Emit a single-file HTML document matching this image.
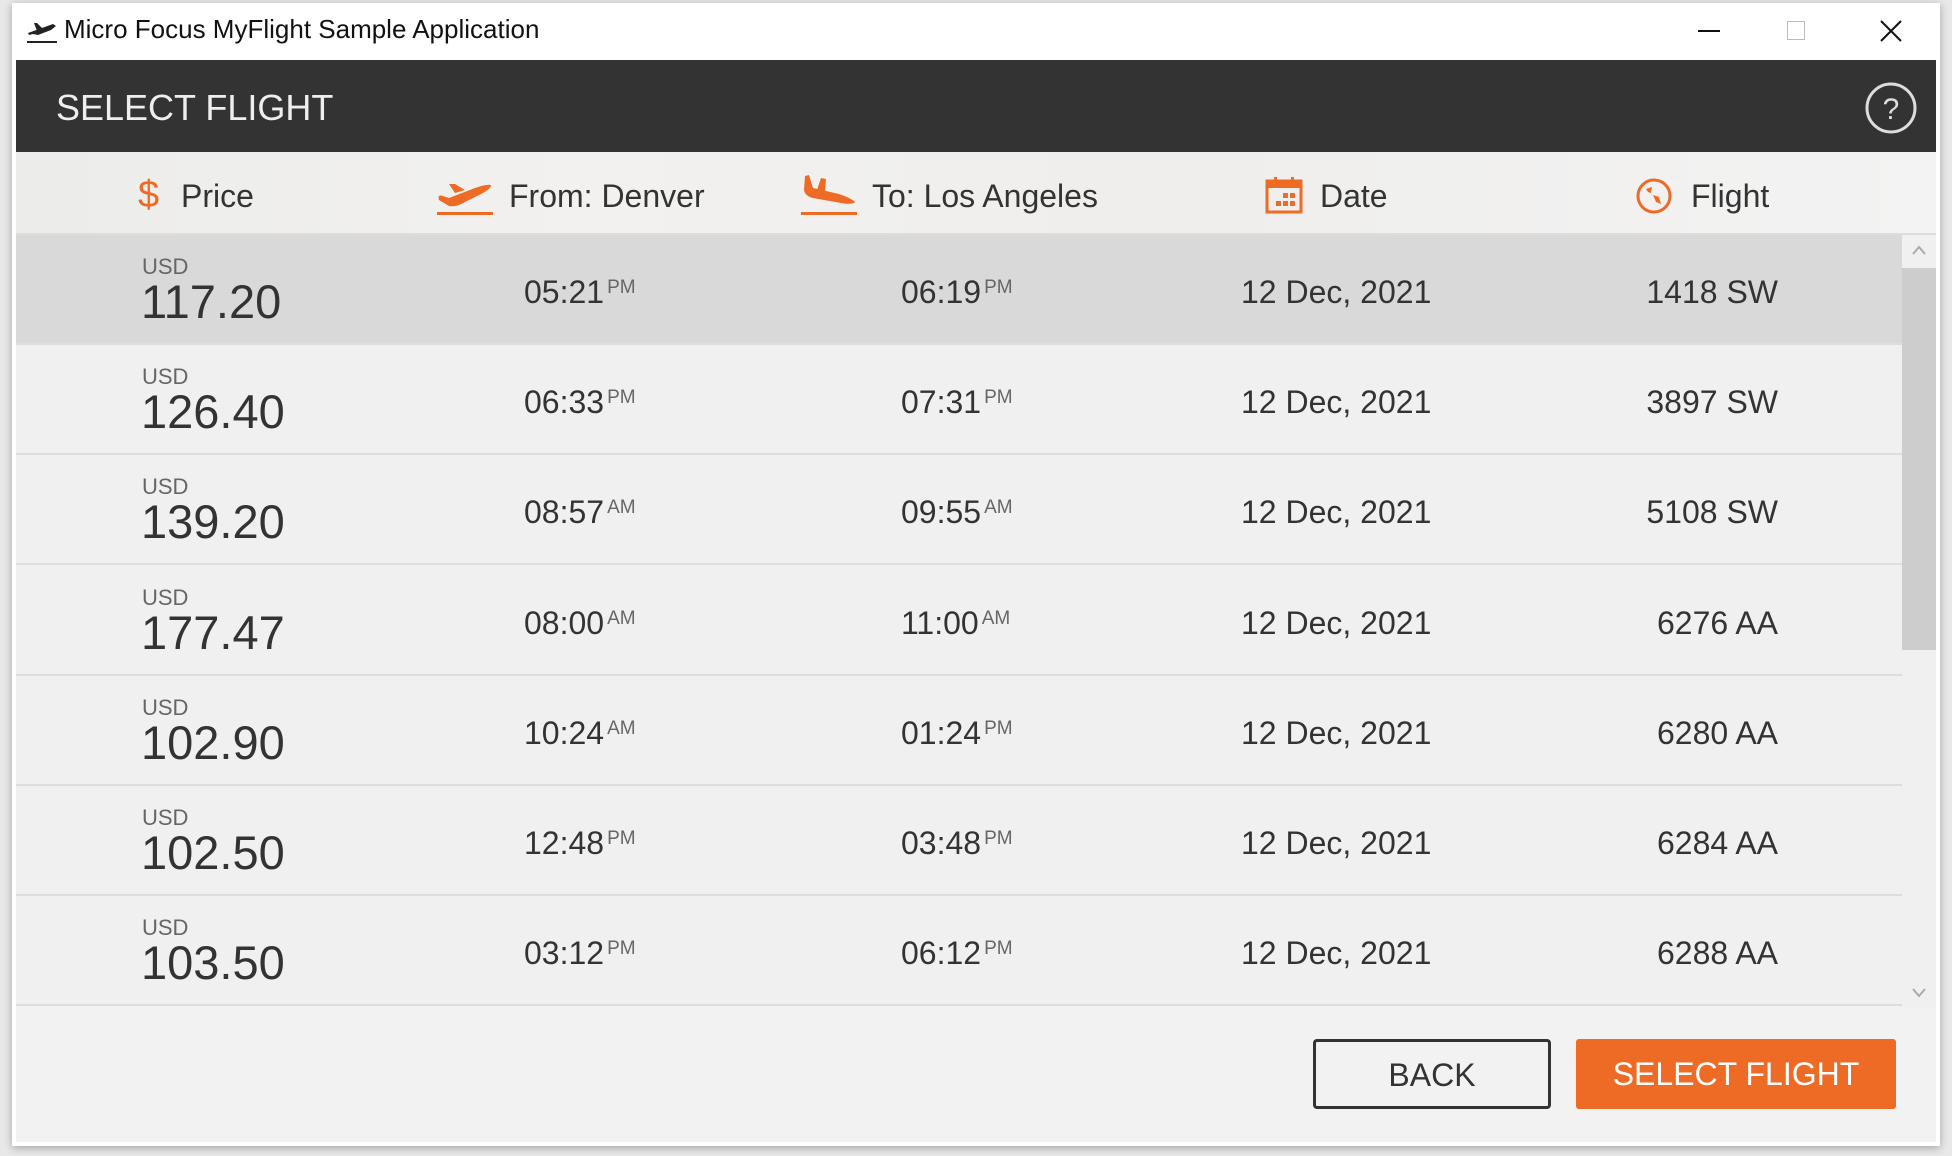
<!DOCTYPE html>
<html><head><meta charset="utf-8"><style>
*{margin:0;padding:0;box-sizing:border-box}
body{width:1952px;height:1156px;background:#e8e8e8;position:relative;overflow:hidden;font-family:"Liberation Sans",sans-serif;color:#333}
.win{position:absolute;left:12px;top:3px;width:1928px;height:1143px;background:#fff;box-shadow:0 2px 8px rgba(0,0,0,.3)}
.abs{position:absolute}
.title{left:52px;top:11px;font-size:26px;color:#111}
.hdr{left:4px;top:57px;width:1920px;height:92px;background:#333}
.hdr .t{left:40px;top:27px;font-size:36px;color:#eee}
.body{left:4px;top:149px;width:1920px;height:990px;background:#f2f2f2}
.colh{left:0;top:0;width:1920px;height:83px;background:linear-gradient(90deg,#ececea,#f2f1ef 30%,#efeeec 60%,#f3f3f3);border-bottom:2px solid #ddd}
.colh span{position:absolute;top:26px;font-size:32px;color:#333}
.row{position:absolute;left:0;width:1886px;height:110px;border-bottom:2px solid #ddd;background:#f0f0f0}
.row.sel{background:#d9d9d9}
.row .usd{position:absolute;left:126px;top:19px;font-size:22px;color:#666}
.row .pr{position:absolute;left:125px;top:39px;font-size:47px;color:#333}
.row .tm{position:absolute;top:39px;font-size:32px;color:#333}
.row .tm sup{font-size:19px;color:#666;vertical-align:10px;margin-left:3px}
.row .dt{position:absolute;left:1225px;top:39px;font-size:32px}
.row .fl{position:absolute;right:124px;top:39px;font-size:32px}
.btn{position:absolute;top:887px;height:70px;font-size:32px;text-align:center;line-height:66px}
</style></head><body>
<div class="win">
<svg class="abs" style="left:13px;top:16px" width="34" height="26" viewBox="0 0 34 26"><path d="M3 14 L28 5 L31 7 L26 11 L13 16 L8 15 L4 16 Z M12 12 L9 4 L12 4 L18 10 Z" fill="#222"/><rect x="2" y="22" width="30" height="2" fill="#222"/></svg>
<div class="abs title">Micro Focus MyFlight Sample Application</div>
<div class="abs" style="left:1686px;top:27px;width:22px;height:2px;background:#111"></div>
<div class="abs" style="left:1775px;top:18px;width:18px;height:19px;border:1.5px solid #bbb"></div>
<svg class="abs" style="left:1868px;top:17px" width="22" height="22"><path d="M1 1L21 21M21 1L1 21" stroke="#111" stroke-width="2"/></svg>
<div class="abs hdr"><div class="abs t">SELECT FLIGHT</div>
<svg class="abs" style="left:1848px;top:21px" width="54" height="54"><circle cx="27" cy="27" r="24" fill="none" stroke="#ddd" stroke-width="3"/><text x="27" y="38" font-size="30" text-anchor="middle" fill="#ddd" font-family="Liberation Sans">?</text></svg>
</div>
<div class="abs body">
<div class="abs colh">
<span style="left:122px;color:#ee6b25;font-size:38px;top:22px">$</span><span style="left:165px">Price</span>
<svg class="abs" style="left:419px;top:24px" width="58" height="42" viewBox="0 0 58 42"><path d="M4 24 Q2 18 8 20 L14 22 L40 12 Q52 8 56 9 Q56 13 46 18 L26 28 Q20 31 14 30 Z M20 17 L14 8 L20 8 L30 14 Z" fill="#ee6b25"/><rect x="2" y="36" width="56" height="3" fill="#ee6b25"/></svg>
<span style="left:493px">From: Denver</span>
<svg class="abs" style="left:783px;top:20px" width="58" height="46" viewBox="0 0 58 46"><path d="M6 4 L10 3 L14 16 L40 22 Q52 26 56 30 Q54 33 42 31 L14 26 Q6 24 5 18 Z M18 18 L22 6 L27 7 L26 20 Z" fill="#ee6b25"/><rect x="2" y="40" width="56" height="3" fill="#ee6b25"/></svg>
<span style="left:856px">To: Los Angeles</span>
<svg class="abs" style="left:1249px;top:24px" width="38" height="38" viewBox="0 0 38 38"><rect x="2" y="5" width="34" height="31" fill="none" stroke="#ee6b25" stroke-width="3"/><rect x="2" y="5" width="34" height="7" fill="#ee6b25"/><rect x="9" y="1" width="3" height="8" fill="#ee6b25"/><rect x="26" y="1" width="3" height="8" fill="#ee6b25"/><g fill="#ee6b25"><rect x="18" y="17" width="5" height="5"/><rect x="25" y="17" width="5" height="5"/><rect x="11" y="25" width="5" height="5"/><rect x="18" y="25" width="5" height="5"/><rect x="25" y="25" width="5" height="5"/></g></svg>
<span style="left:1304px">Date</span>
<svg class="abs" style="left:1619px;top:25px" width="38" height="38" viewBox="0 0 38 38"><circle cx="19" cy="19" r="16" fill="none" stroke="#ee6b25" stroke-width="3"/><path d="M11 12 L17 10 L16 16 L13 15 Z M18 18 L24 20 L26 27 L21 25 Z" fill="#ee6b25"/></svg>
<span style="left:1675px">Flight</span>
</div>
<div class="row sel" style="top:83px"><div class="usd">USD</div><div class="pr">117.20</div><div class="tm" style="left:508px">05:21<sup>PM</sup></div><div class="tm" style="left:885px">06:19<sup>PM</sup></div><div class="dt">12 Dec, 2021</div><div class="fl">1418 SW</div></div>
<div class="row" style="top:193px"><div class="usd">USD</div><div class="pr">126.40</div><div class="tm" style="left:508px">06:33<sup>PM</sup></div><div class="tm" style="left:885px">07:31<sup>PM</sup></div><div class="dt">12 Dec, 2021</div><div class="fl">3897 SW</div></div>
<div class="row" style="top:303px"><div class="usd">USD</div><div class="pr">139.20</div><div class="tm" style="left:508px">08:57<sup>AM</sup></div><div class="tm" style="left:885px">09:55<sup>AM</sup></div><div class="dt">12 Dec, 2021</div><div class="fl">5108 SW</div></div>
<div class="row" style="top:414px"><div class="usd">USD</div><div class="pr">177.47</div><div class="tm" style="left:508px">08:00<sup>AM</sup></div><div class="tm" style="left:885px">11:00<sup>AM</sup></div><div class="dt">12 Dec, 2021</div><div class="fl">6276 AA</div></div>
<div class="row" style="top:524px"><div class="usd">USD</div><div class="pr">102.90</div><div class="tm" style="left:508px">10:24<sup>AM</sup></div><div class="tm" style="left:885px">01:24<sup>PM</sup></div><div class="dt">12 Dec, 2021</div><div class="fl">6280 AA</div></div>
<div class="row" style="top:634px"><div class="usd">USD</div><div class="pr">102.50</div><div class="tm" style="left:508px">12:48<sup>PM</sup></div><div class="tm" style="left:885px">03:48<sup>PM</sup></div><div class="dt">12 Dec, 2021</div><div class="fl">6284 AA</div></div>
<div class="row" style="top:744px"><div class="usd">USD</div><div class="pr">103.50</div><div class="tm" style="left:508px">03:12<sup>PM</sup></div><div class="tm" style="left:885px">06:12<sup>PM</sup></div><div class="dt">12 Dec, 2021</div><div class="fl">6288 AA</div></div>
<div class="abs" style="left:1886px;top:83px;width:34px;height:772px;background:#f0f0f0"></div>
<div class="abs" style="left:1886px;top:116px;width:34px;height:382px;background:#cdcdcd"></div>
<svg class="abs" style="left:1895px;top:92px" width="16" height="12"><path d="M2 10L8 3L14 10" fill="none" stroke="#aaa" stroke-width="2"/></svg>
<svg class="abs" style="left:1895px;top:835px" width="16" height="12"><path d="M2 2L8 9L14 2" fill="none" stroke="#aaa" stroke-width="2"/></svg>
<div class="btn" style="left:1297px;width:238px;border:3px solid #333;border-radius:4px;color:#333">BACK</div>
<div class="btn" style="left:1560px;width:320px;background:#ee6b25;color:#fff;border-radius:3px;line-height:70px">SELECT FLIGHT</div>
</div>
</div>
</body></html>
